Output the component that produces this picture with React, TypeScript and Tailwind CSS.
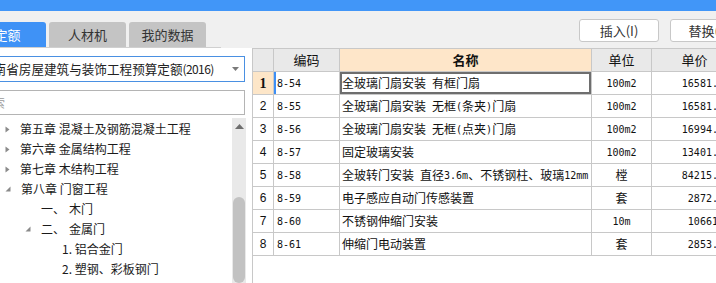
import React from 'react';

const FONT = { fontFamily: '"Noto Sans CJK SC", "Noto Sans", sans-serif' };
const MONO = { fontFamily: '"DejaVu Sans Mono", "Liberation Mono", monospace' };

interface Row {
  no: number;
  code: string;
  name: string;
  unit: string;
  price: string;
}

const rows: Row[] = [
  { no: 1, code: '8-54', name: '全玻璃门扇安装 有框门扇', unit: '100m2', price: '16581.46' },
  { no: 2, code: '8-55', name: '全玻璃门扇安装 无框(条夹)门扇', unit: '100m2', price: '16581.46' },
  { no: 3, code: '8-56', name: '全玻璃门扇安装 无框(点夹)门扇', unit: '100m2', price: '16994.73' },
  { no: 4, code: '8-57', name: '固定玻璃安装', unit: '100m2', price: '13401.37' },
  { no: 5, code: '8-58', name: '全玻转门安装 直径3.6m、不锈钢柱、玻璃12mm', unit: '樘', price: '84215.62' },
  { no: 6, code: '8-59', name: '电子感应自动门传感装置', unit: '套', price: '2872.45' },
  { no: 7, code: '8-60', name: '不锈钢伸缩门安装', unit: '10m', price: '10661.5' },
  { no: 8, code: '8-61', name: '伸缩门电动装置', unit: '套', price: '2853.21' },
];

// ascii runs get the narrow mono font, like the half-width glyphs of the original
const Mixed = ({ text }: { text: string }) => (
  <>
    {text.split(/([\x20-\x7e]+)/).map((part, i) =>
      /^[\x20-\x7e]+$/.test(part) ? (
        <span key={i} className="text-[10px] whitespace-pre" style={MONO}>
          {part}
        </span>
      ) : (
        <span key={i}>{part}</span>
      )
    )}
  </>
);

type Arrow = 'none' | 'closed' | 'open';

const tree: { label: React.ReactNode; arrow: Arrow; indent: number }[] = [
  { label: '第五章 混凝土及钢筋混凝土工程', arrow: 'closed', indent: 0 },
  { label: '第六章 金属结构工程', arrow: 'closed', indent: 0 },
  { label: '第七章 木结构工程', arrow: 'closed', indent: 0 },
  { label: '第八章 门窗工程', arrow: 'open', indent: 0 },
  { label: <><span className="mr-[4px]">一、</span>木门</>, arrow: 'none', indent: 1 },
  { label: <><span className="mr-[4px]">二、</span>金属门</>, arrow: 'open', indent: 1 },
  { label: '1. 铝合金门', arrow: 'none', indent: 2 },
  { label: '2. 塑钢、彩板钢门', arrow: 'none', indent: 2 },
];

const ArrowIcon = ({ type }: { type: Arrow }) => {
  if (type === 'closed')
    return (
      <svg width="5" height="7" viewBox="0 0 5 7" className="shrink-0">
        <path d="M0.5 0.5 L4.5 3.5 L0.5 6.5 Z" fill="#8a8a8a" />
      </svg>
    );
  if (type === 'open')
    return (
      <svg width="6" height="6" viewBox="0 0 6 6" className="shrink-0">
        <path d="M5.5 0.5 L5.5 5.5 L0.5 5.5 Z" fill="#8a8a8a" />
      </svg>
    );
  return <span className="w-[6px] shrink-0" />;
};

const LeftPanel = () => (
  <div className="w-[252px] shrink-0 flex flex-col bg-white">
    {/* dropdown */}
    <div className="mt-[8px] ml-[-10px] mr-[7px] h-[26px] border border-[#4a90e2] bg-white flex items-center overflow-hidden">
      <span className="ml-[-10px] text-[12.6px] text-[#222] whitespace-nowrap flex-1">
        河南省房屋建筑与装饰工程预算定额<span className="text-[12px] tracking-[-0.6px]">(2016)</span>
      </span>
      <svg width="7" height="4" viewBox="0 0 7 4" className="mr-[5px] shrink-0">
        <path d="M0 0 L7 0 L3.5 4 Z" fill="#7a7a7a" />
      </svg>
    </div>
    {/* search */}
    <div className="mt-[8px] ml-[-10px] mr-[7px] h-[25px] border border-[#b4b4b4] bg-white flex items-center overflow-hidden">
      <span className="ml-[-10px] text-[12px] text-[#9a9a9a] whitespace-nowrap">搜索</span>
    </div>
    {/* tree */}
    <div className="mt-[3px] flex flex-1 min-h-0">
      <div className="w-[232px] overflow-hidden pt-[1px]">
        {tree.map((t, i) => (
          <div
            key={i}
            className={`h-[20px] flex items-center whitespace-nowrap text-[12px] text-[#1a1a1a] ${
              t.indent === 0 ? 'pl-[5px]' : t.indent === 1 ? 'pl-[25px]' : 'pl-[56px]'
            }`}
          >
            <ArrowIcon type={t.arrow} />
            <span className={t.indent === 2 ? 'ml-0' : 'ml-[10px]'}>{t.label}</span>
          </div>
        ))}
      </div>
      <div className="w-[14px] bg-[#e9e9e9] flex flex-col items-center">
        <svg width="9" height="5" viewBox="0 0 9 5" className="mt-[6px]">
          <path d="M0 5 L4.5 0 L9 5 Z" fill="#6e6e6e" />
        </svg>
        <div className="mt-[68px] w-[12px] flex-1 rounded-[6px] bg-[#c2c2c2]" />
      </div>
    </div>
  </div>
);

const Table = () => (
  <div className="flex-1 overflow-hidden border-l border-t border-[#c8c8c8] bg-white">
    <div className="w-[490px]">
      <div className="flex h-[23px] border-b border-[#c8c8c8] text-[13px] text-[#111]">
        <div className="w-[21px] border-r border-[#c8c8c8] bg-[#e9e9e9]" />
        <div className="w-[66px] border-r border-[#c8c8c8] bg-[#e9e9e9] flex items-center justify-center">编码</div>
        <div className="w-[252px] border-r border-[#c8c8c8] bg-[#fee6c9] flex items-center justify-center font-bold">名称</div>
        <div className="w-[60px] border-r border-[#c8c8c8] bg-[#e9e9e9] flex items-center justify-center">单位</div>
        <div className="w-[86px] border-r border-[#c8c8c8] bg-[#e9e9e9] flex items-center justify-center">单价</div>
      </div>
      {rows.map((r) => {
        const sel = r.no === 1;
        return (
          <div key={r.no} className="flex h-[23px] border-b border-[#c8c8c8] text-[12px] text-[#111]">
            <div
              className={`w-[21px] border-r border-[#c8c8c8] flex items-center justify-center ${
                sel ? 'bg-[#fde6c8] font-bold text-[14px]' : 'text-[12px]'
              }`}
              style={sel ? { fontFamily: '"Liberation Serif", serif' } : { fontFamily: '"Liberation Sans", sans-serif' }}
            >
              {r.no}
            </div>
            <div
              className={`w-[66px] border-r border-[#c8c8c8] flex items-center text-[10px] pl-[3px] ${
                sel ? 'shadow-[inset_2px_0_0_#3d8ff5]' : ''
              }`}
              style={MONO}
            >
              {r.code}
            </div>
            <div
              className={`w-[252px] border-r border-[#c8c8c8] flex items-center pl-[2px] whitespace-nowrap overflow-hidden ${
                sel ? 'shadow-[inset_0_0_0_2px_#6e6e6e]' : ''
              }`}
            >
              <Mixed text={r.name} />
            </div>
            <div className="w-[60px] border-r border-[#c8c8c8] flex items-center justify-center">
              <Mixed text={r.unit} />
            </div>
            <div className="w-[86px] border-r border-[#c8c8c8] flex items-center justify-end pr-[7px] text-[10px]" style={MONO}>
              {r.price}
            </div>
          </div>
        );
      })}
    </div>
  </div>
);

export default function App() {
  return (
    <div className="w-[716px] h-[283px] overflow-hidden bg-white flex flex-col" style={FONT}>
      <div className="h-[11px] bg-[#4196f8] shrink-0" />
      <div className="h-[37px] shrink-0 flex bg-[#f0f0f0]">
        <div className="w-[252px] shrink-0 flex items-end">
          <div className="flex items-end gap-[3px] ml-[-31px] border-b border-[#d0d0d0] w-full">
            <div className="w-[77px] h-[25px] rounded-t-[3px] bg-[#3f92f6] text-white text-[13px] flex items-center justify-center">定额</div>
            <div className="w-[77px] h-[25px] rounded-t-[3px] bg-[#c4c4c4] text-[#333] text-[13px] flex items-center justify-center">人材机</div>
            <div className="w-[77px] h-[25px] rounded-t-[3px] bg-[#c4c4c4] text-[#333] text-[13px] flex items-center justify-center">我的数据</div>
          </div>
        </div>
        <div className="flex-1 flex items-start pt-[8px] pl-[327px] gap-[11px] overflow-hidden">
          <button className="w-[80px] h-[23px] shrink-0 rounded-[3px] border border-[#c8c8c8] bg-white text-[13px] text-[#333]">插入(I)</button>
          <button className="w-[80px] h-[23px] shrink-0 rounded-[3px] border border-[#c8c8c8] bg-white text-[13px] text-[#333]">替换(R)</button>
        </div>
      </div>
      <div className="flex flex-1 min-h-0">
        <LeftPanel />
        <Table />
      </div>
    </div>
  );
}
